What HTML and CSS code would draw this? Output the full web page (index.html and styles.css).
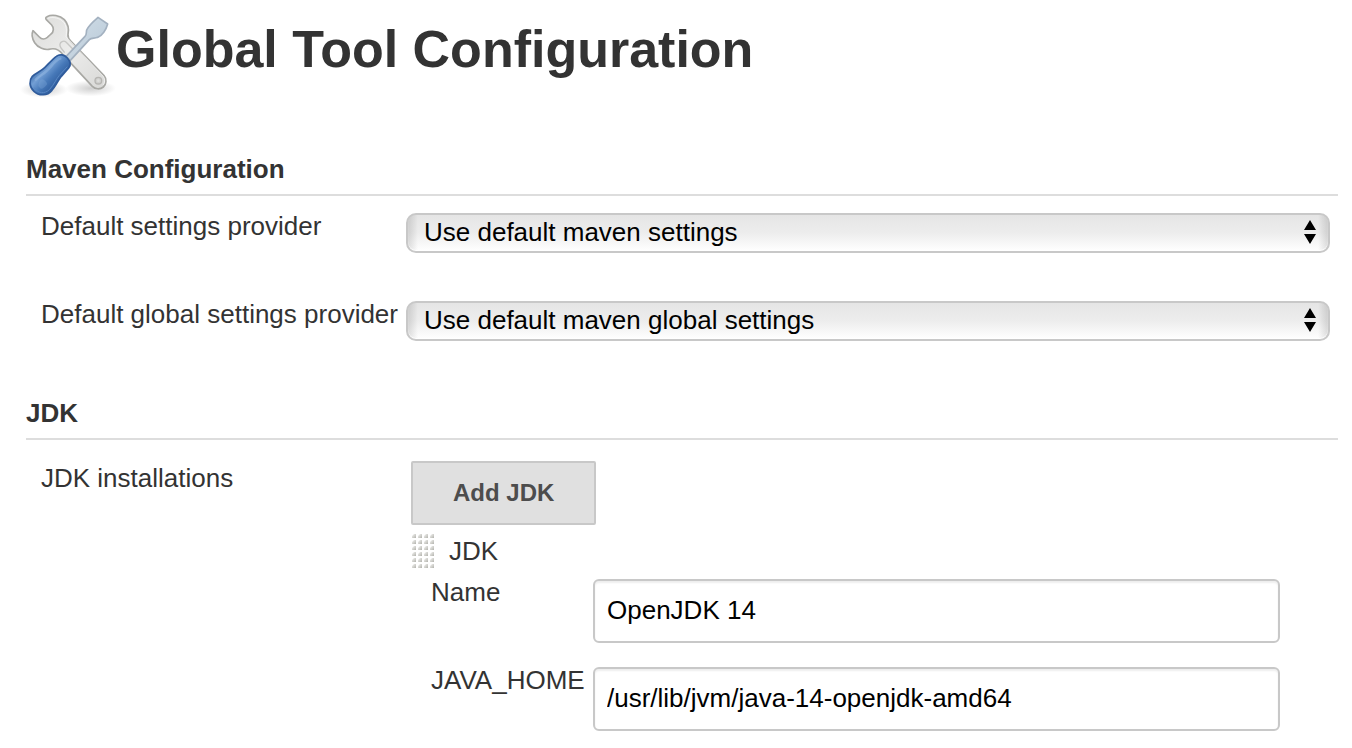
FILE: index.html
```html
<!DOCTYPE html>
<html lang="en">
<head>
<meta charset="utf-8">
<title>Global Tool Configuration</title>
<link rel="stylesheet" href="styles.css">
</head>
<body>
<main class="page">
  <header class="page-header">
    <svg class="page-icon" viewBox="30 12 288 288" aria-hidden="true">
      <defs>
        <radialGradient id="shade"><stop offset="0" stop-color="#888" stop-opacity=".4"/><stop offset="1" stop-color="#888" stop-opacity="0"/></radialGradient>
        <linearGradient id="steel" x1="0" y1="0" x2="1" y2="1"><stop offset="0" stop-color="#dcdcda"/><stop offset=".5" stop-color="#ececeb"/><stop offset="1" stop-color="#d8d8d6"/></linearGradient>
        <linearGradient id="handle" gradientUnits="userSpaceOnUse" x1="85" y1="195" x2="150" y2="255"><stop offset="0" stop-color="#3465a4"/><stop offset=".3" stop-color="#739fd5"/><stop offset=".6" stop-color="#4678b8"/><stop offset="1" stop-color="#2a5798"/></linearGradient>
        <linearGradient id="blade" x1="0" y1="0" x2="1" y2="1"><stop offset="0" stop-color="#d3dfe9"/><stop offset="1" stop-color="#b7c8d6"/></linearGradient>
      </defs>
      <ellipse cx="102" cy="269" rx="72" ry="24" fill="url(#shade)"/>
      <ellipse cx="242" cy="265" rx="76" ry="24" fill="url(#shade)"/>
      <path d="M111 50C126 42 150 46 163 59C174 71 178 86 174 104C173 112 177 118 183 124L282 227C291 237 289 254 280 261C270 269 256 268 247 259L158 163C148 150 137 144 122 147C103 152 84 143 74 128C67 117 64 103 69 92L88 111C95 119 105 118 112 112L123 102C132 95 132 83 125 75L109 59C106 56 107 52 111 50Z" fill="url(#steel)" stroke="#a8a8a4" stroke-width="5" stroke-linejoin="round"/>
      <path d="M113 55C130 49 151 54 162 68C171 80 170 98 168 110L279 228C286 237 285 249 279 255" fill="none" stroke="#fff" stroke-width="3" opacity=".6"/>
      <path d="M153 144Q145 131 156 125Q164 120 171 129L192 151M153 144L164 158" fill="none" stroke="#c6c6c4" stroke-width="4"/>
      <circle cx="265" cy="242" r="10" fill="#d0d0ce" stroke="#b6b5b2" stroke-width="4"/>
      <circle cx="265" cy="242" r="4" fill="#dededc"/>
      <path d="M168 170L225 109C231 104 228 98 230 90C235 77 249 65 264 52L293 72C289 88 276 108 263 112C252 116 245 112 238 119L181 181Z" fill="url(#blade)" stroke="#a3b1c0" stroke-width="5" stroke-linejoin="round"/>
      <path d="M139 169C149 161 163 164 172 174C181 184 184 195 176 204L154 229C145 240 137 259 125 272C113 287 87 289 72 274C57 260 57 241 67 229C77 219 93 214 104 203C116 191 127 178 139 169Z" fill="url(#handle)" stroke="#2f5b9b" stroke-width="5"/>
      <path d="M77 239C89 226 107 220 119 204C130 192 140 178 151 176" fill="none" stroke="#9fc0e6" stroke-width="7" stroke-linecap="round" opacity=".4"/>
      <path d="M73 263C83 281 105 283 119 268C132 254 139 236 148 226L172 200" fill="none" stroke="#5886c2" stroke-width="3"/>
      <path d="M85 258Q86 241 96 238Q107 240 112 252Q101 267 92 266Z" fill="#82aadb" opacity=".35"/>
    </svg>
    <h1 class="page-title">Global Tool Configuration</h1>
  </header>

  <section class="section">
    <h2 class="section-title">Maven Configuration</h2>
    <div class="setting">
      <label class="setting-label" for="settings">Default settings provider</label>
      <div class="select-box">
        <select class="select" id="settings"><option>Use default maven settings</option></select>
        <svg class="select-arrows" viewBox="0 0 12 24" aria-hidden="true"><path d="M6 0L12 10H0ZM0 14H12L6 24Z"/></svg>
      </div>
    </div>
    <div class="setting">
      <label class="setting-label" for="global-settings">Default global settings provider</label>
      <div class="select-box">
        <select class="select" id="global-settings"><option>Use default maven global settings</option></select>
        <svg class="select-arrows" viewBox="0 0 12 24" aria-hidden="true"><path d="M6 0L12 10H0ZM0 14H12L6 24Z"/></svg>
      </div>
    </div>
  </section>

  <section class="section">
    <h2 class="section-title">JDK</h2>
    <div class="installations">
      <span class="setting-label">JDK installations</span>
      <div class="installation-list">
        <button class="add-button" type="button">Add JDK</button>
        <div class="installation-head">
          <svg class="grip" viewBox="0 0 24 36" aria-hidden="true">
            <defs>
              <linearGradient id="dot" x1="0" y1="0" x2="1" y2="1"><stop offset=".1" stop-color="#f0f0ee"/><stop offset="1" stop-color="#b2b2ac"/></linearGradient>
              <pattern id="dots" width="6" height="6" patternUnits="userSpaceOnUse"><path d="M1 5V3L3 1H5V5Z" fill="url(#dot)"/></pattern>
            </defs>
            <rect width="24" height="36" fill="url(#dots)"/>
          </svg>
          <span>JDK</span>
        </div>
        <div class="field">
          <label class="field-label" for="name">Name</label>
          <input class="input" id="name" type="text" value="OpenJDK 14">
        </div>
        <div class="field">
          <label class="field-label" for="java-home">JAVA_HOME</label>
          <input class="input" id="java-home" type="text" value="/usr/lib/jvm/java-14-openjdk-amd64">
        </div>
      </div>
    </div>
  </section>
</main>
</body>
</html>
```
FILE: styles.css
```css
* {
  box-sizing: border-box;
}

body {
  margin: 0;
  background: #fff;
  color: #333;
  font: 26px/30px "Liberation Sans", Arial, sans-serif;
}

.page {
  padding: 4px 14px 16px 26px;
}

.page-header {
  display: flex;
  align-items: flex-start;
  margin-left: -6px;
  margin-bottom: 54px;
}

.page-icon {
  width: 96px;
  height: 96px;
  flex: none;
}

.page-title {
  margin: 15px 0 0;
  font-size: 52px;
  line-height: 60px;
}

.section + .section {
  margin-top: 57px;
}

.section-title {
  margin: 0;
  padding-bottom: 10px;
  border-bottom: 2px solid #ddd;
  font-size: 26px;
  line-height: 30px;
}

.setting {
  display: grid;
  grid-template-columns: 380px 1fr;
  align-items: start;
  padding: 15px 8px 0 0;
}

.setting + .setting {
  margin-top: 46px;
  padding-top: 0;
}

.setting-label {
  padding-left: 15px;
  white-space: nowrap;
}

.select-box {
  position: relative;
  margin-top: 2px;
}

.select {
  display: block;
  width: 100%;
  height: 40px;
  padding: 0 40px 2px 16px;
  appearance: none;
  border: 2px solid #c8c8c8;
  border-radius: 10px;
  background:
    linear-gradient(to right, rgba(0, 0, 0, .12), transparent 10px, transparent calc(100% - 10px), rgba(0, 0, 0, .12)),
    linear-gradient(#e5e5e5, #ededed 50%, #fff);
  box-shadow: inset 0 -1px 1px #fff;
  color: #000;
  font: inherit;
}

.select-arrows {
  position: absolute;
  top: 7px;
  right: 14px;
  width: 12px;
  height: 24px;
  fill: #000;
  pointer-events: none;
}

.installations {
  display: grid;
  grid-template-columns: 385px 1fr;
  padding-top: 21px;
}

.installations > .setting-label {
  padding-top: 2px;
}

.add-button {
  display: block;
  height: 64px;
  padding: 0 40px;
  border: 2px solid #c8c8c8;
  border-radius: 2px;
  background: #e0e0e0;
  color: #4d4d4d;
  font: bold 24px/30px "Liberation Sans", Arial, sans-serif;
}

.installation-head {
  display: flex;
  align-items: center;
  gap: 14px;
  margin: 8px 0;
}

.grip {
  width: 24px;
  height: 36px;
}

.field {
  display: grid;
  grid-template-columns: 162px 1fr;
  align-items: start;
  margin-bottom: 22px;
  padding: 0 58px 0 20px;
}

.field:last-child {
  margin-bottom: 0;
}

.input {
  width: 100%;
  height: 64px;
  margin-top: 2px;
  padding: 0 12px 2px;
  border: 2px solid #c8c8c8;
  border-radius: 6px;
  background: #fff;
  box-shadow: inset 0 2px 2px rgba(0, 0, 0, .07);
  color: #000;
  font: inherit;
}
```
